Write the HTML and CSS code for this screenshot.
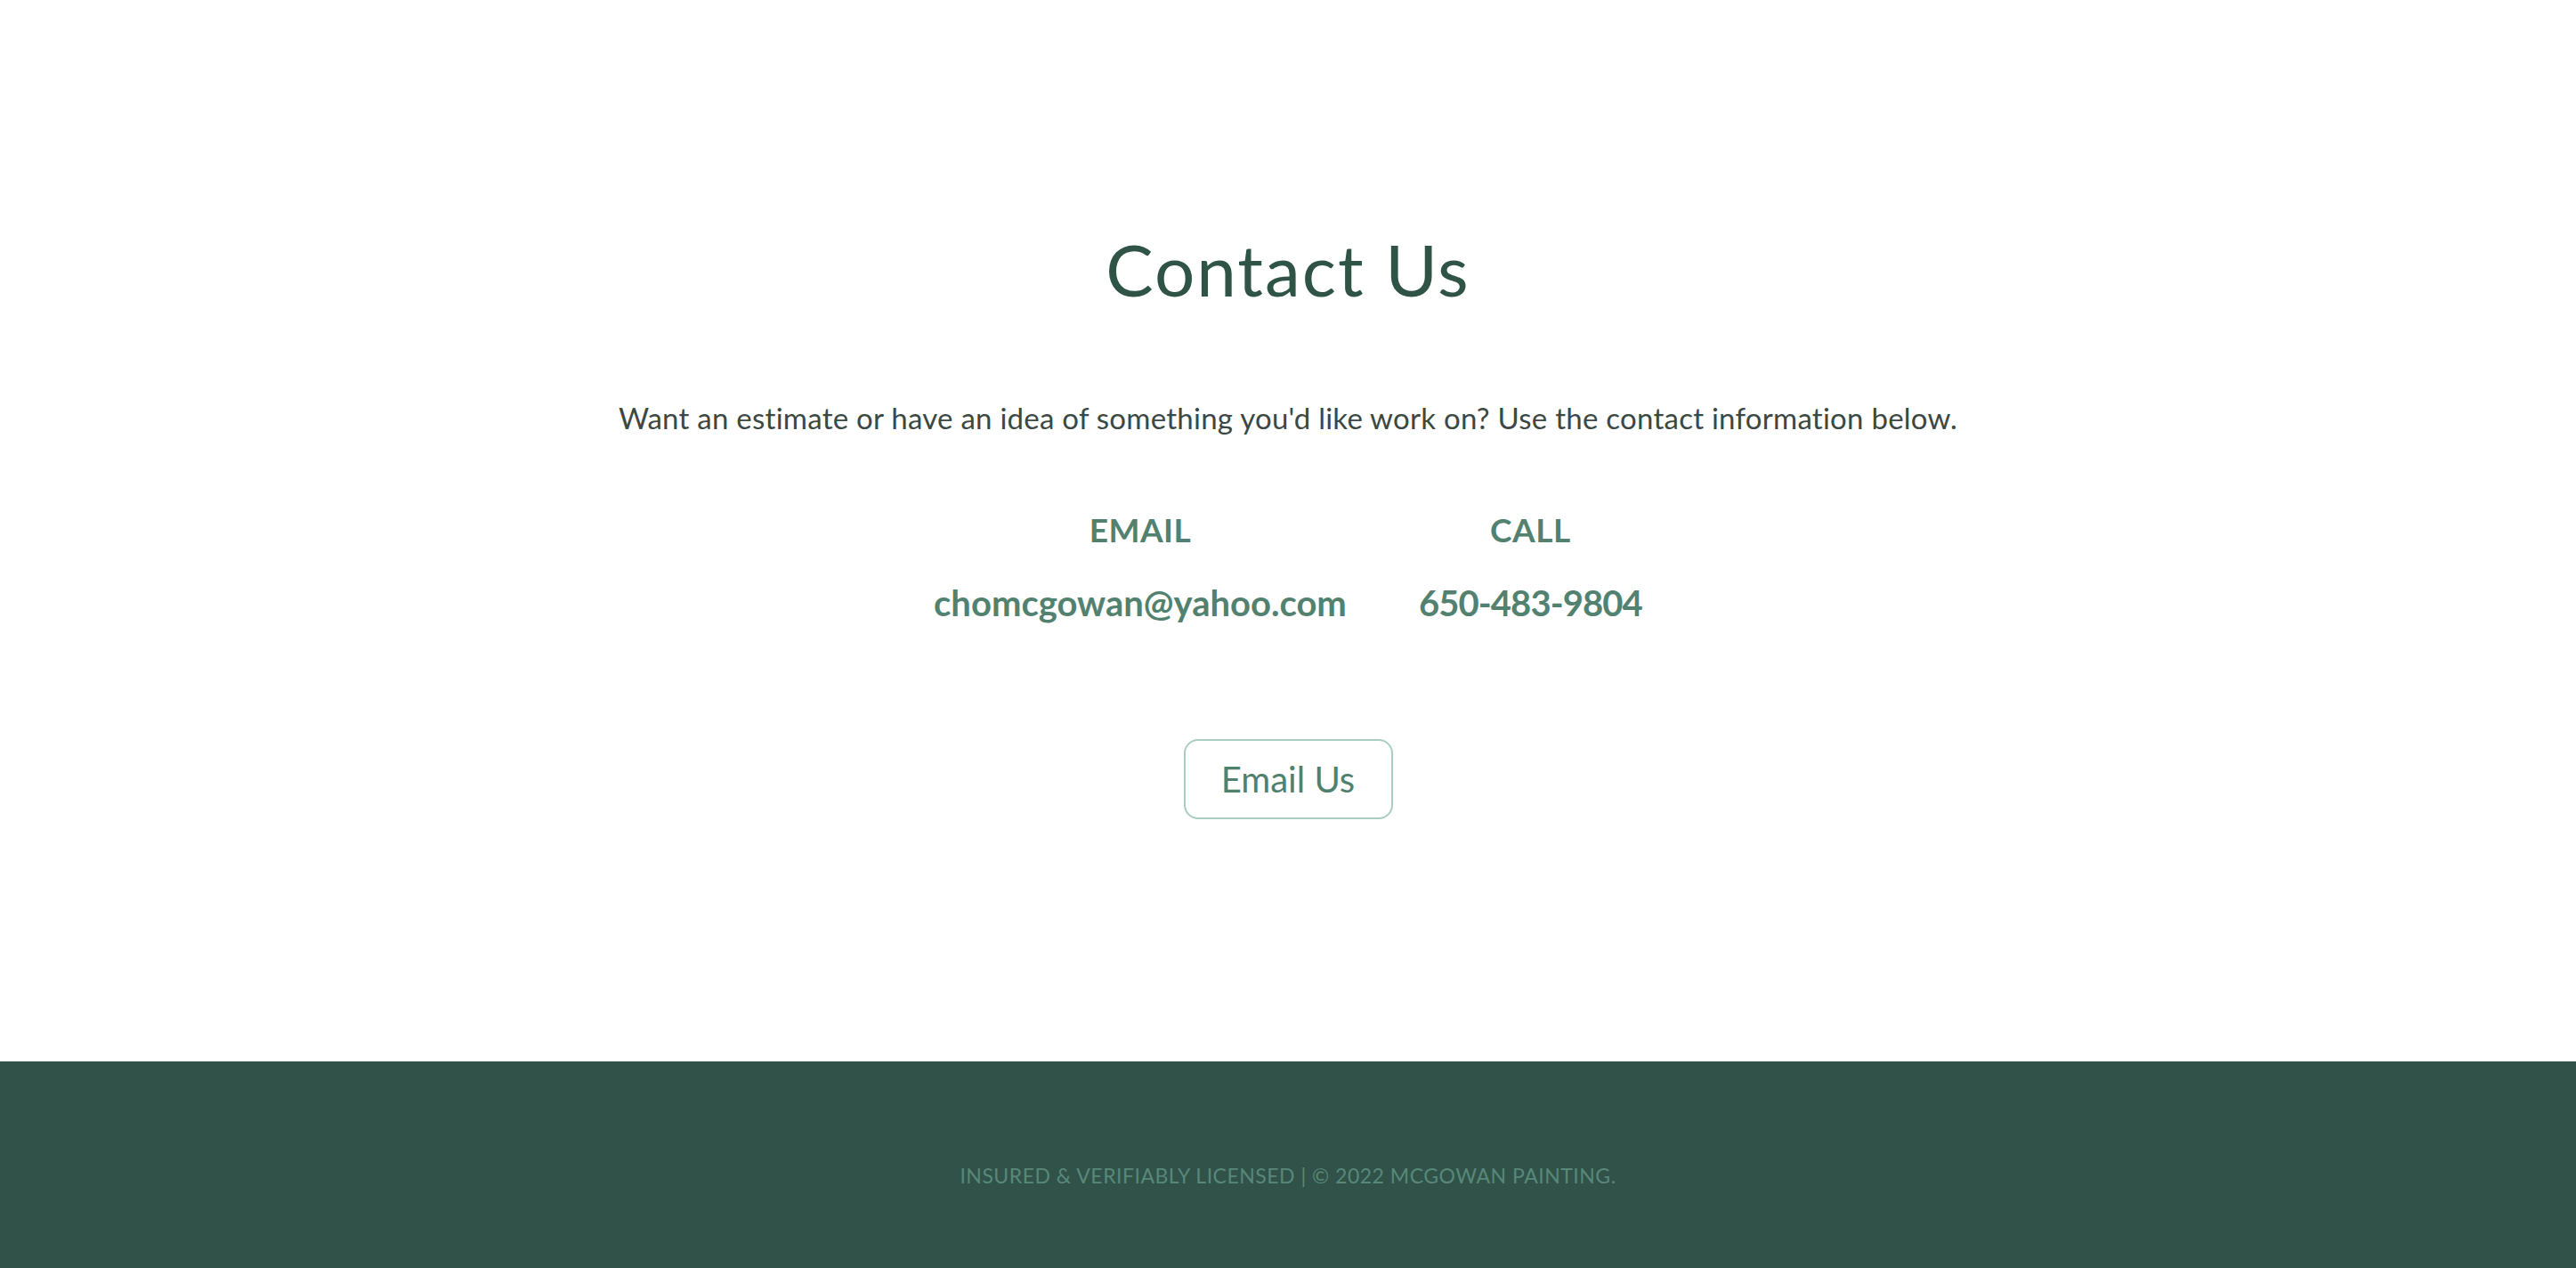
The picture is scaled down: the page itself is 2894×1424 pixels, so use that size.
FILE: index.html
```html
<!DOCTYPE html>
<html lang="en">
<head>
<meta charset="utf-8">
<title>Contact Us</title>
<link rel="stylesheet" href="styles.css">
</head>
<body>
<main class="contact">
  <h1 class="contact-title">Contact Us</h1>
  <p class="contact-lead">Want an estimate or have an idea of something you'd like work on? Use the contact information below.</p>
  <div class="contact-grid">
    <div class="contact-item">
      <h3 class="contact-label">EMAIL</h3>
      <a class="contact-value" href="#">chomcgowan@yahoo.com</a>
    </div>
    <div class="contact-item">
      <h3 class="contact-label">CALL</h3>
      <a class="contact-value contact-phone" href="#">650-483-9804</a>
    </div>
  </div>
  <a class="contact-button" href="#">Email Us</a>
</main>
<footer class="site-footer">
  <p class="footer-text">INSURED &amp; VERIFIABLY LICENSED | © 2022 MCGOWAN PAINTING.</p>
</footer>
</body>
</html>
```
FILE: styles.css
```css
html, body {
  margin: 0;
  padding: 0;
  background: #ffffff;
}
body {
  font-family: Lato, "Open Sans", sans-serif;
  min-height: 1424px;
  display: flex;
  flex-direction: column;
}
.contact {
  display: flex;
  flex-direction: column;
  align-items: center;
  padding: 254px 0 272px;
}
.contact-title {
  margin: 0;
  font-size: 80px;
  line-height: 96px;
  font-weight: 400;
  letter-spacing: 2px;
  color: #2f5446;
}
.contact-lead {
  margin: 99px 0 0;
  font-size: 33px;
  line-height: 40px;
  letter-spacing: 0.25px;
  color: #3b4843;
}
.contact-grid {
  display: flex;
  justify-content: center;
  gap: 81px;
  margin-top: 82px;
}
.contact-item {
  display: flex;
  flex-direction: column;
  align-items: center;
}
.contact-label {
  margin: 0;
  font-size: 37px;
  line-height: 47px;
  font-weight: 700;
  letter-spacing: 0.5px;
  color: #52826f;
}
.contact-value {
  margin-top: 34px;
  font-size: 40px;
  line-height: 50px;
  font-weight: 700;
  color: #52826f;
  text-decoration: none;
}
.contact-phone {
  letter-spacing: -0.9px;
}
.contact-button {
  margin-top: 128px;
  box-sizing: border-box;
  width: 235px;
  height: 90px;
  display: flex;
  align-items: center;
  justify-content: center;
  border: 2px solid #a9cdc0;
  border-radius: 16px;
  font-size: 40px;
  color: #4f816d;
  text-decoration: none;
}
.site-footer {
  background: #315248;
  height: 232px;
  box-sizing: border-box;
  padding-top: 115px;
  margin-top: auto;
}
.footer-text {
  margin: 0;
  text-align: center;
  font-size: 23px;
  line-height: 26px;
  letter-spacing: 0.5px;
  color: #57887a;
}
```
